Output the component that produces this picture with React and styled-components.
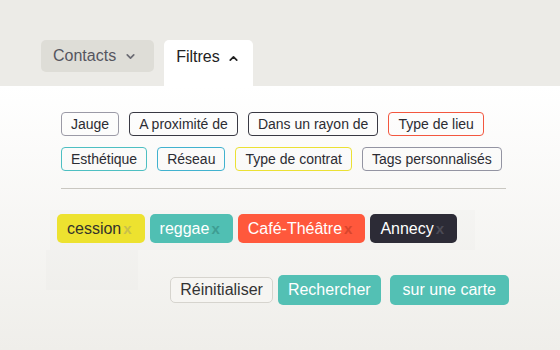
import React from "react";
import styled, { createGlobalStyle } from "styled-components";
import { ChevronDown, ChevronUp } from "lucide-react";

const GlobalStyle = createGlobalStyle`
    html, body {
        margin: 0;
        padding: 0;
        background: #ecebe7;
        font-family: "Liberation Sans", Arial, sans-serif;
    }
`;

const Page = styled.div`
    width: 560px;
    height: 350px;
    display: flex;
    flex-direction: column;
    overflow: hidden;
`;

const TabBar = styled.div`
    display: flex;
    align-items: flex-start;
    gap: 10px;
    padding: 40px 0 0 41px;
    height: 46px;
`;

const MenuButton = styled.div`
    display: flex;
    align-items: center;
    gap: 8px;
    height: 32px;
    padding: 0 17px 0 12px;
    box-sizing: border-box;
    background: #deddd7;
    border-radius: 5px;
    color: #55555f;
    font-size: 16px;
`;

const ActiveTab = styled.div`
    display: flex;
    align-items: flex-start;
    gap: 7px;
    height: 46px;
    padding: 8px 13px 0 12px;
    box-sizing: border-box;
    background: #fff;
    border-radius: 5px 5px 0 0;
    color: #222;
    font-size: 16px;
    line-height: 18px;

    svg {
        margin-top: 4px;
    }
`;

const Panel = styled.div`
    flex: 1;
    background: linear-gradient(#ffffff, #efeeea);
    padding: 26px 51px 0 61px;
    display: flex;
    flex-direction: column;
`;

const ChipRow = styled.div`
    display: flex;
    gap: 10px;
    margin-bottom: 11px;
`;

const Chip = styled.span`
    display: inline-flex;
    align-items: center;
    height: 24px;
    padding: 0 9px;
    box-sizing: border-box;
    border: 1px solid ${props => props.color};
    border-radius: 4px;
    font-size: 14px;
    color: #2c2c33;
    white-space: nowrap;
`;

const Divider = styled.hr`
    width: 445px;
    margin: 6px 0 0;
    border: 0;
    border-top: 1px solid #c9c7c1;
`;

const TagBox = styled.div`
    display: flex;
    gap: 5px;
    width: 425px;
    box-sizing: border-box;
    margin: 21px 0 0 -11px;
    padding: 4px 7px 7px;
    background: rgba(0, 0, 0, 0.012);
`;

const Tag = styled.span`
    display: inline-flex;
    align-items: center;
    height: 29px;
    padding: 0 13px 0 10px;
    border-radius: 5px;
    background: ${props => props.bg};
    color: ${props => props.fg};
    font-size: 16px;
    white-space: nowrap;
`;

const Remove = styled.span`
    margin-left: 2px;
    font-size: 15px;
    font-weight: bold;
    color: ${props => props.color};
`;

const ActionsRow = styled.div`
    display: flex;
    align-items: flex-start;
`;

const Ghost = styled.div`
    width: 92px;
    height: 40px;
    margin-left: -15px;
    background: rgba(0, 0, 0, 0.012);
`;

const ButtonGroup = styled.div`
    display: flex;
    align-items: center;
    gap: 5px;
    margin: 25px 0 0 auto;
`;

const Button = styled.button`
    font-family: inherit;
    font-size: 16px;
    border-radius: 5px;
    cursor: pointer;
    height: ${props => (props.primary ? "30px" : "26px")};
    padding: 0 ${props => props.pad || 9}px;
    margin-left: ${props => (props.spaced ? "4px" : "0")};
    border: ${props => (props.primary ? "none" : "1px solid #d6d4ce")};
    background: ${props => (props.primary ? "#53c0b4" : "#f6f5f2")};
    color: ${props => (props.primary ? "#fff" : "#333")};
`;

const filters = [
    [
        { label: "Jauge", color: "#9b9aa6" },
        { label: "A proximité de", color: "#393943" },
        { label: "Dans un rayon de", color: "#393943" },
        { label: "Type de lieu", color: "#f3573f" },
    ],
    [
        { label: "Esthétique", color: "#4dbfc2" },
        { label: "Réseau", color: "#41b2cf" },
        { label: "Type de contrat", color: "#ebe134" },
        { label: "Tags personnalisés", color: "#9394a2" },
    ],
];

const tags = [
    { label: "cession", bg: "#ede22f", fg: "#33322c", x: "#c9c04a" },
    { label: "reggae", bg: "#50bfb3", fg: "#ffffff", x: "#3e9d92" },
    { label: "Café-Théâtre", bg: "#ff583c", fg: "#ffffff", x: "#d9452c" },
    { label: "Annecy", bg: "#2c2b36", fg: "#ffffff", x: "#4b4a55" },
];

export default function App() {
    return (
        <Page>
            <GlobalStyle />
            <TabBar>
                <MenuButton>
                    Contacts <ChevronDown size={13} strokeWidth={3.2} color="#6c6c74" />
                </MenuButton>
                <ActiveTab>
                    Filtres <ChevronUp size={13} strokeWidth={3.2} color="#222" />
                </ActiveTab>
            </TabBar>
            <Panel>
                {filters.map((row, i) => (
                    <ChipRow key={i}>
                        {row.map(f => (
                            <Chip key={f.label} color={f.color}>
                                {f.label}
                            </Chip>
                        ))}
                    </ChipRow>
                ))}
                <Divider />
                <TagBox>
                    {tags.map(t => (
                        <Tag key={t.label} bg={t.bg} fg={t.fg}>
                            {t.label}
                            <Remove color={t.x}>x</Remove>
                        </Tag>
                    ))}
                </TagBox>
                <ActionsRow>
                    <Ghost />
                    <ButtonGroup>
                        <Button>Réinitialiser</Button>
                        <Button primary pad={10}>Rechercher</Button>
                        <Button primary pad={13} spaced>sur une carte</Button>
                    </ButtonGroup>
                </ActionsRow>
            </Panel>
        </Page>
    );
}
